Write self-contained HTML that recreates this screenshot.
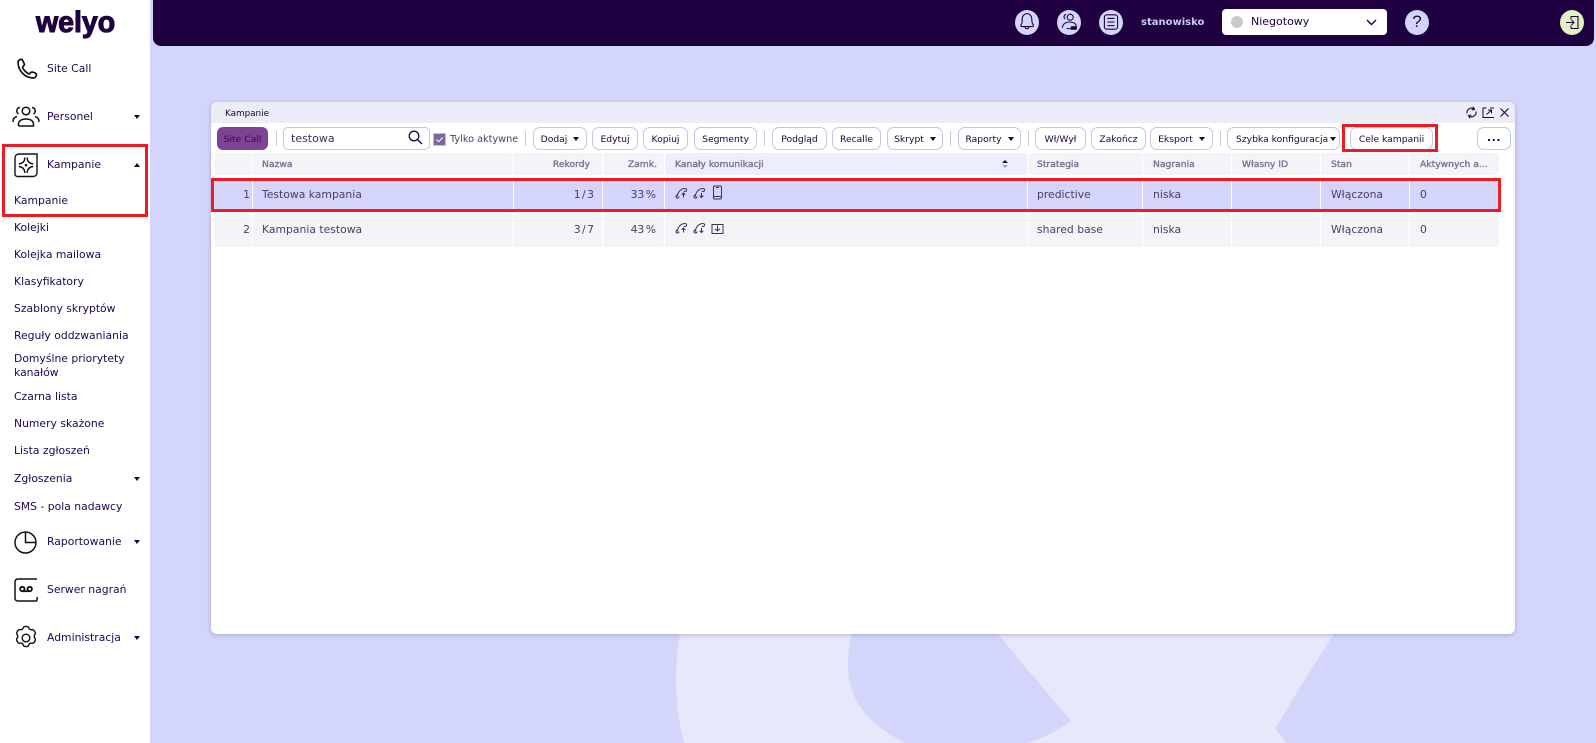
<!DOCTYPE html>
<html lang="pl"><head><meta charset="utf-8"><title>Welyo - Kampanie</title>
<style>
*{box-sizing:border-box}
html,body{margin:0;padding:0;width:1596px;height:743px;overflow:hidden;background:#d3d5fa;font-family:"DejaVu Sans","Liberation Sans",sans-serif;color:#1f0040}
.a,.t,.b,.c,.s{position:absolute}
.t{white-space:nowrap;line-height:14px;height:14px;margin-top:1px}
#side{left:0;top:0;width:150px;height:743px;background:#fff}
.m{font-size:10.8px;left:47px;color:#21064f}
.n{font-size:10.8px;left:14px;color:#21064f}
.car{position:absolute;left:134px;width:0;height:0;border-left:3.5px solid transparent;border-right:3.5px solid transparent;border-top:4px solid #1f0040}
.car.up{border-top:0;border-bottom:4px solid #1f0040}
svg{position:absolute;overflow:visible}
.b{top:127px;height:23px;border:1px solid #c5c5e4;border-radius:7px;background:#fff;font-size:9.2px;line-height:23px;text-align:center;white-space:nowrap;color:#1f0040}
.b i{display:inline-block;width:0;height:0;border-left:3.5px solid transparent;border-right:3.5px solid transparent;border-top:4px solid #1f0040;margin-left:6px;vertical-align:1px}
.s{top:131px;width:1px;height:15px;background:#c9c9d6}
.c{border-radius:3px}
.h{top:153px;height:22px;background:#f3f3f8}
.r1{top:181px;height:28px;background:#d3d5fa;border-radius:0}
.r2{top:213px;height:34px;background:#f3f3f8}
.hd{font-size:9.2px;font-weight:400;color:#7b7193;top:157px;-webkit-text-stroke:.35px #7b7193}
.v{font-size:10.8px;color:#4a3d63}
.tight{word-spacing:-2px}
.red{position:absolute;border:3px solid #ed1c24}
.ic{position:absolute;top:10px;width:24px;height:25px;border-radius:50%;background:#d3d5fa}
</style></head><body>
<svg style="left:0;top:0" width="1596" height="743" viewBox="0 0 1596 743">
<path d="M682 625 Q676 650 676 683 Q677 718 684 743 L906 743 C868 725 848 700 848 665 Q848 645 854 625 Z" fill="#e7e8fb"/>
<path d="M990 625 L1071 721 Q1050 736 1027 743 L1287 743 L1275 729 Q1310 670 1340 625 Z" fill="#e7e8fb"/>
</svg>

<div class="a" id="side"></div>
<div class="t" style="left:36px;top:5px;margin-top:0;height:36px;line-height:36px;font-family:'Liberation Sans',sans-serif;font-weight:700;font-size:30px;color:#1f0040;-webkit-text-stroke:1.1px #1f0040;transform:scaleX(.95);transform-origin:0 50%">welyo</div>

<svg style="left:16px;top:58px" width="22" height="22" viewBox="0 0 22 22" fill="none" stroke="#111" stroke-width="1.7"><path d="M2 4.500C2 2.500 4 1 6 1.500 7 3 8 5 8.500 6.500 8 8 6.500 8.500 6.500 9.500 8 12.500 10 14.500 13 16 14 15.800 14.500 14 16 14 18 14.300 20 15 20.500 16.500 20.500 18.500 19 20 17 20 8.500 19.500 2.500 13 2 4.500Z"/></svg>

<svg style="left:12px;top:106px" width="28" height="21" viewBox="0 0 28 21" fill="none" stroke="#111" stroke-width="1.500"><circle cx="14" cy="5" r="3.800"/><path d="M6.500 20v-2c0-3 3-5 7.500-5s7.500 2 7.500 5v2H6.500"/><path d="M8 1.500a3.500 3.500 0 0 0-1.500 6.500M20 1.500a3.500 3.500 0 0 1 1.500 6.500M5 10.500C2.500 11 1 13 1 16M23 10.500c2.500.5 4 2.500 4 5.500"/></svg>

<svg style="left:14px;top:153px" width="24" height="24" viewBox="0 0 24 24" fill="none" stroke="#111" stroke-width="1.400"><path d="M23 1H5C2.500 1 1 2.500 1 5v16c0 1.500 1 2.500 2.500 2.500H19c2.500 0 4-1.500 4-4V1z"/><path d="M10.800 4.500c0 3.500-2 6-6 6.500M13.200 4.500c0 3.500 2 6 6 6.500M4.800 13.500c4 .5 6 3 6 6.500M19.200 13.500c-4 .5-6 3-6 6.500"/><circle cx="12" cy="12.200" r="1.300" fill="#111" stroke="none"/></svg>

<svg style="left:14px;top:531px" width="24" height="23" viewBox="0 0 24 23" fill="none" stroke="#111" stroke-width="1.500"><circle cx="11.500" cy="11.500" r="10.500"/><path d="M11.500 1V11.500H22"/></svg>

<svg style="left:14px;top:578px" width="24" height="24" viewBox="0 0 24 24" fill="none" stroke="#111" stroke-width="1.500"><path d="M23 1H4C2.200 1 1 2.200 1 4v16c0 1.800 1.200 3 3 3h18.500c.5-1 .8-2.500.7-4"/><circle cx="8.300" cy="11" r="2.200" stroke-width="1.800"/><circle cx="15.700" cy="11" r="2.200" stroke-width="1.800"/><path d="M8.300 13.200h7.400" stroke-width="1.800"/></svg>

<svg style="left:14px;top:626px" width="24" height="24" viewBox="2 1 20 22" fill="none" stroke="#111" stroke-width="1.300"><circle cx="12" cy="12" r="3.500"/><path d="M9.500 2.500c.5-1.500 4.500-1.500 5 0 .3 1.500 1.500 2.200 3 1.800 1.500-.5 3.800 3 2.800 4.300-1 1-1 2.800 0 3.800 1 1.300-1 5-2.800 4.400-1.500-.5-2.700.3-3 1.800-.5 1.700-4.500 1.700-5 0-.3-1.500-1.500-2.300-3-1.800-1.800.6-3.800-3.100-2.800-4.400 1-1 1-2.800 0-3.800-1-1.300 1.300-4.800 2.800-4.300 1.500.4 2.700-.3 3-1.800z"/></svg>

<div class="t m" style="top:61px">Site Call</div>
<div class="t m" style="top:109px">Personel</div><div class="car" style="top:115px"></div>
<div class="t m" style="top:157px">Kampanie</div><div class="car up" style="top:163px"></div>
<div class="t n" style="top:193px">Kampanie</div>
<div class="t n" style="top:220px">Kolejki</div>
<div class="t n" style="top:247px">Kolejka mailowa</div>
<div class="t n" style="top:274px">Klasyfikatory</div>
<div class="t n" style="top:301px">Szablony skryptów</div>
<div class="t n" style="top:328px">Reguły oddzwaniania</div>
<div class="t n" style="top:351px">Domyślne priorytety</div>
<div class="t n" style="top:365px">kanałów</div>
<div class="t n" style="top:389px">Czarna lista</div>
<div class="t n" style="top:416px">Numery skażone</div>
<div class="t n" style="top:443px">Lista zgłoszeń</div>
<div class="t n" style="top:471px">Zgłoszenia</div><div class="car" style="top:477px"></div>
<div class="t n" style="top:499px">SMS - pola nadawcy</div>
<div class="t m" style="top:534px">Raportowanie</div><div class="car" style="top:540px"></div>
<div class="t m" style="top:582px">Serwer nagrań</div>
<div class="t m" style="top:630px">Administracja</div><div class="car" style="top:636px"></div>
<div class="red" style="left:2px;top:144px;width:146px;height:73px"></div>

<div class="a" style="left:153px;top:0;width:1441px;height:46px;background:#1f0040;border-radius:0 0 8px 8px"></div>
<div class="ic" style="left:1015px"></div>
<svg style="left:1015px;top:10px" width="24" height="25" viewBox="2 3.500 20 20.800" fill="none" stroke="#1f0040" stroke-width=".9"><path d="M7 16c1.200-1.500 1-3 1-5 0-2.500 1.700-4.500 4-4.500s4 2 4 4.500c0 2 0 3.500 1.200 5 .5.800 0 1.300-.7 1.300H7.700c-.7 0-1.200-.5-.7-1.300zM10.500 17.500c0 2 3 2 3 0"/></svg>
<div class="ic" style="left:1057px"></div>
<svg style="left:1057px;top:10px" width="24" height="25" viewBox="2 3 20 20.800" fill="none" stroke="#1f0040" stroke-width=".9"><circle cx="13" cy="9" r="2.500"/><path d="M9.500 6.500a2.500 2.500 0 0 0-1 4M6.500 18c0-3 2.500-5 6-5s5.500 1.500 5.500 3.500v2h-8"/><path d="M14 17h4v2h-4z" fill="#1f0040"/></svg>
<div class="ic" style="left:1099px"></div>
<svg style="left:1099px;top:10px" width="24" height="25" viewBox="2 2.500 20 20.800" fill="none" stroke="#1f0040" stroke-width=".9"><rect x="6.500" y="6.500" width="11" height="12" rx="2"/><path d="M9 9.500h6M9 12.500h6M9 15.500h6"/></svg>
<div class="t" style="left:1141px;top:15px;font-size:10px;font-weight:700;color:#c9cbf3">stanowisko</div>
<div class="a" style="left:1222px;top:9px;width:165px;height:26px;background:#fff;border-radius:4px"></div>
<div class="a" style="left:1231px;top:16px;width:12px;height:12px;border-radius:50%;background:#c9c9c9"></div>
<div class="t" style="left:1251px;top:14px;font-size:11px;color:#1f0040">Niegotowy</div>
<svg style="left:1366px;top:19px" width="11" height="7" viewBox="0 0 11 7" fill="none" stroke="#1f0040" stroke-width="1.400"><path d="M1 1l4.500 4.500L10 1"/></svg>
<div class="ic" style="left:1405px"></div>
<div class="t" style="left:1405px;width:24px;top:14px;text-align:center;font-size:17px;color:#1f0040;font-family:'Liberation Sans',sans-serif">?</div>
<div class="ic" style="left:1560px;background:#dff2c0"></div>
<svg style="left:1560px;top:10px" width="24" height="25" viewBox="0 0 24 25" fill="none" stroke="#1f0040" stroke-width="1.100"><path d="M11 6.500h7v12h-7M11 6.500v3M11 18.500v-3M6 12.500h8M11.500 10l2.500 2.500-2.500 2.500"/></svg>

<div class="a" style="left:211px;top:102px;width:1304px;height:532px;background:#fff;border-radius:6px;box-shadow:0 1px 4px rgba(90,80,150,.35)"></div>
<div class="a" style="left:211px;top:102px;width:1304px;height:21px;background:#ecedf6;border-radius:6px 6px 0 0"></div>
<div class="t" style="left:225px;top:106px;font-size:8.800px">Kampanie</div>
<svg style="left:1465px;top:106px" width="13" height="13" viewBox="0 0 13 13" fill="none" stroke="#1f0040" stroke-width="1.100"><path d="M2 7.500a4.500 4.500 0 0 1 7-4.500M11 5.500a4.500 4.500 0 0 1-7 4.500"/><path d="M8 .8l1.500 2.600-2.800.5M5 12.200L3.500 9.600l2.800-.5"/></svg>
<svg style="left:1482px;top:107px" width="13" height="12" viewBox="0 0 13 12" fill="none" stroke="#1f0040" stroke-width="1"><path d="M12 10.500H1V1h3.500M8 1h4M4.500 7.500L9 3.500M6 3h3.500v3.500"/></svg>
<svg style="left:1500px;top:108px" width="9" height="9" viewBox="0 0 9 9" fill="none" stroke="#1f0040" stroke-width="1.100"><path d="M.5.500l8 8M8.500.500l-8 8"/></svg>

<div class="b" style="left:217px;width:51px;background:#7f4396;border-color:#7f4396;color:#2c0a4d;border-radius:6px">Site Call</div>
<div class="s" style="left:276px"></div>
<div class="b" style="left:283px;width:147px;border-radius:5px"></div>
<div class="t" style="left:291px;top:131px;font-size:11px;color:#3e2c5c">testowa</div>
<svg style="left:408px;top:130px" width="15" height="15" viewBox="0 0 15 15" fill="none" stroke="#1f0040" stroke-width="1.300"><circle cx="6" cy="6" r="4.800"/><path d="M9.500 9.500L14 14"/></svg>
<div class="a" style="left:433px;top:133px;width:13px;height:13px;background:#7b6a98;border:1px solid #c2c2de"></div>
<svg style="left:433px;top:133px" width="13" height="13" viewBox="0 0 13 13" fill="none" stroke="#fff" stroke-width="1"><path d="M3.500 6.500l2.200 2.200 4-4.200"/></svg>
<div class="t" style="left:450px;top:132px;font-size:9.700px;color:#4a3d63">Tylko aktywne</div>
<div class="s" style="left:525px"></div>
<div class="b" style="left:533px;width:54px">Dodaj<i></i></div>
<div class="b" style="left:592px;width:46px">Edytuj</div>
<div class="b" style="left:643px;width:45px">Kopiuj</div>
<div class="b" style="left:694px;width:63px">Segmenty</div>
<div class="s" style="left:764px"></div>
<div class="b" style="left:772px;width:55px">Podgląd</div>
<div class="b" style="left:832px;width:49px">Recalle</div>
<div class="b" style="left:887px;width:56px">Skrypt<i></i></div>
<div class="s" style="left:950px"></div>
<div class="b" style="left:958px;width:63px">Raporty<i></i></div>
<div class="s" style="left:1028px"></div>
<div class="b" style="left:1035px;width:51px">Wł/Wył</div>
<div class="b" style="left:1091px;width:55px">Zakończ</div>
<div class="b" style="left:1150px;width:63px">Eksport<i></i></div>
<div class="s" style="left:1220px"></div>
<div class="b" style="left:1227px;width:113px;text-align:left;padding-left:8px">Szybka konfiguracja<i style="margin-left:2px"></i></div>
<div class="b" style="left:1350px;width:83px">Cele kampanii</div>
<div class="b" style="left:1477px;width:34px;font-weight:700;font-size:11px;letter-spacing:.5px;line-height:19px">...</div>
<div class="red" style="left:1342px;top:124px;width:96px;height:28px"></div>

<div class="c h" style="left:215px;width:37px"></div>
<div class="c h" style="left:253px;width:260px"></div>
<div class="c h" style="left:514px;width:88px"></div>
<div class="c h" style="left:603px;width:61px"></div>
<div class="c h" style="left:665px;width:362px;background:#ecedfd"></div>
<div class="c h" style="left:1028px;width:114px"></div>
<div class="c h" style="left:1143px;width:88px"></div>
<div class="c h" style="left:1232px;width:88px"></div>
<div class="c h" style="left:1321px;width:88px"></div>
<div class="c h" style="left:1410px;width:89px"></div>
<div class="t hd" style="left:262px">Nazwa</div>
<div class="t hd" style="left:540px;width:50px;text-align:right">Rekordy</div>
<div class="t hd" style="left:610px;width:47px;text-align:right">Zamk.</div>
<div class="t hd" style="left:675px">Kanały komunikacji</div>
<div class="a" style="left:1002px;top:160px;width:0;height:0;border-left:3px solid transparent;border-right:3px solid transparent;border-bottom:3.500px solid #1f0040"></div>
<div class="a" style="left:1002px;top:165px;width:0;height:0;border-left:3px solid transparent;border-right:3px solid transparent;border-top:3.500px solid #a8a4bd"></div>
<div class="t hd" style="left:1037px">Strategia</div>
<div class="t hd" style="left:1153px">Nagrania</div>
<div class="t hd" style="left:1242px">Własny ID</div>
<div class="t hd" style="left:1331px">Stan</div>
<div class="t hd" style="left:1420px">Aktywnych a...</div>

<div class="a r1" style="left:211px;width:41px"></div>
<div class="a r1" style="left:253px;width:260px"></div>
<div class="a r1" style="left:514px;width:88px"></div>
<div class="a r1" style="left:603px;width:61px"></div>
<div class="a r1" style="left:665px;width:362px"></div>
<div class="a r1" style="left:1028px;width:114px"></div>
<div class="a r1" style="left:1143px;width:88px"></div>
<div class="a r1" style="left:1232px;width:88px"></div>
<div class="a r1" style="left:1321px;width:88px"></div>
<div class="a r1" style="left:1410px;width:90px"></div>

<div class="c r2" style="left:215px;width:37px"></div>
<div class="c r2" style="left:253px;width:260px"></div>
<div class="c r2" style="left:514px;width:88px"></div>
<div class="c r2" style="left:603px;width:61px"></div>
<div class="c r2" style="left:665px;width:362px"></div>
<div class="c r2" style="left:1028px;width:114px"></div>
<div class="c r2" style="left:1143px;width:88px"></div>
<div class="c r2" style="left:1232px;width:88px"></div>
<div class="c r2" style="left:1321px;width:88px"></div>
<div class="c r2" style="left:1410px;width:89px"></div>

<div class="t v" style="left:215px;width:35px;top:187px;text-align:right">1</div>
<div class="t v" style="left:262px;top:187px">Testowa kampania</div>
<div class="t v tight" style="left:540px;width:54px;top:187px;text-align:right">1 / 3</div>
<div class="t v tight" style="left:610px;width:46px;top:187px;text-align:right">33 %</div>
<div class="t v" style="left:1037px;top:187px">predictive</div>
<div class="t v" style="left:1153px;top:187px">niska</div>
<div class="t v" style="left:1331px;top:187px">Włączona</div>
<div class="t v" style="left:1420px;top:187px">0</div>

<div class="t v" style="left:215px;width:35px;top:222px;text-align:right">2</div>
<div class="t v" style="left:262px;top:222px">Kampania testowa</div>
<div class="t v tight" style="left:540px;width:54px;top:222px;text-align:right">3 / 7</div>
<div class="t v tight" style="left:610px;width:46px;top:222px;text-align:right">43 %</div>
<div class="t v" style="left:1037px;top:222px">shared base</div>
<div class="t v" style="left:1153px;top:222px">niska</div>
<div class="t v" style="left:1331px;top:222px">Włączona</div>
<div class="t v" style="left:1420px;top:222px">0</div>

<svg style="left:676px;top:186px" width="50" height="15" viewBox="0 0 50 15" fill="none" stroke="#3e2c5c" stroke-width="1"><path d="M1.500 10.500C1.500 6 5 2.500 9 2.500M1.500 9a1.500 1.500 0 1 0 1.500 1.500M9 2.500a1.500 1.500 0 1 1-1 2.500M7.500 11.500V7M5.700 8.800L7.500 7l1.800 1.800"/><path d="M19.500 10.500C19.500 6 23 2.500 27 2.500M19.500 9a1.500 1.500 0 1 0 1.500 1.500M27 2.500a1.500 1.500 0 1 1-1 2.500M25.500 7V11.500M23.700 9.700l1.800 1.800 1.800-1.800"/></svg>
<svg style="left:713px;top:185px" width="10" height="16" viewBox="0 0 10 16" fill="none" stroke="#3e2c5c" stroke-width="1"><rect x=".5" y="1" width="8" height="13" rx="1.200"/><path d="M.5 11.500h8M3 2.500h3"/></svg>
<svg style="left:676px;top:221px" width="50" height="15" viewBox="0 0 50 15" fill="none" stroke="#3e2c5c" stroke-width="1"><path d="M1.500 10.500C1.500 6 5 2.500 9 2.500M1.500 9a1.500 1.500 0 1 0 1.500 1.500M9 2.500a1.500 1.500 0 1 1-1 2.500M7.500 11.500V7M5.700 8.800L7.500 7l1.800 1.800"/><path d="M19.500 10.500C19.500 6 23 2.500 27 2.500M19.500 9a1.500 1.500 0 1 0 1.500 1.500M27 2.500a1.500 1.500 0 1 1-1 2.500M25.500 7V11.500M23.700 9.700l1.800 1.800 1.800-1.800"/></svg>
<svg style="left:711px;top:223px" width="13" height="12" viewBox="0 0 13 12" fill="none" stroke="#3e2c5c" stroke-width="1"><rect x="1" y="1.500" width="11" height="9"/><path d="M6.500 2.500V8M4 5.800L6.500 8 9 5.800M1 1.500h2M10 1.500h2"/></svg>

<div class="red" style="left:211px;top:178px;width:1290px;height:34px"></div>
</body></html>
